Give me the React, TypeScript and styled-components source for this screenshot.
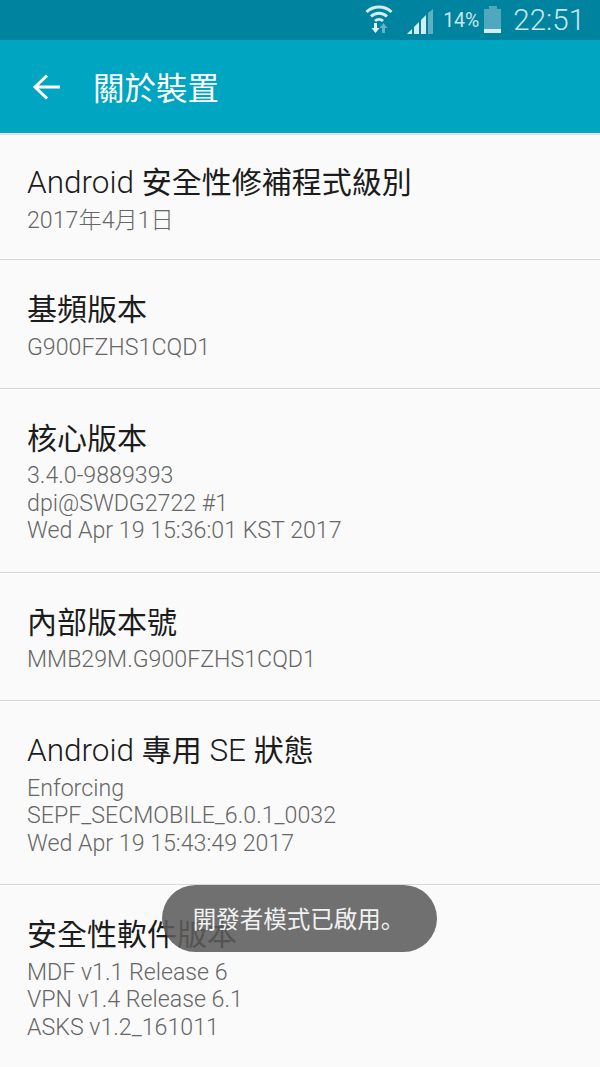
import React, { FC } from 'react';
import styled, { createGlobalStyle } from 'styled-components';

const sans = `Roboto, "Noto Sans CJK TC", sans-serif`;

const GlobalStyle = createGlobalStyle`
    html, body {
        margin: 0;
        padding: 0;
        background: #fafafa;
    }
    body {
        font-family: ${sans};
    }
`;

type InfoItem = {
    title: string;
    lines: string[];
};

const items: InfoItem[] = [
    { title: 'Android 安全性修補程式級別', lines: ['2017年4月1日'] },
    { title: '基頻版本', lines: ['G900FZHS1CQD1'] },
    {
        title: '核心版本',
        lines: ['3.4.0-9889393', 'dpi@SWDG2722 #1', 'Wed Apr 19 15:36:01 KST 2017'],
    },
    { title: '內部版本號', lines: ['MMB29M.G900FZHS1CQD1'] },
    {
        title: 'Android 專用 SE 狀態',
        lines: ['Enforcing', 'SEPF_SECMOBILE_6.0.1_0032', 'Wed Apr 19 15:43:49 2017'],
    },
    {
        title: '安全性軟件版本',
        lines: ['MDF v1.1 Release 6', 'VPN v1.4 Release 6.1', 'ASKS v1.2_161011'],
    },
];

const App: FC = () => (
    <Screen>
        <GlobalStyle />
        <StatusBar>
            <WifiIcon width="28" height="29" viewBox="0 0 28 29" fill="none">
                <path d="M1.500 8A18 18 0 0 1 26.500 8" stroke="#d3edf2" strokeWidth="3" />
                <path d="M6 12.500A11.500 11.500 0 0 1 22 12.500" stroke="#d3edf2" strokeWidth="3" />
                <path d="M10 17A6 6 0 0 1 18 17" stroke="#d3edf2" strokeWidth="3" />
                <path d="M9 19h3v5h2.500l-4 5-4-5H9z" fill="#e4f4f7" />
                <path d="M17 29v-5h-2.500l4-5 4 5H20v5z" fill="#62b3c5" />
            </WifiIcon>
            <SignalIcon width="26" height="25" viewBox="0 0 26 25">
                <path d="M0 25l5-5v5z" fill="#d3edf2" />
                <path d="M7 18l5-5v12H7z" fill="#d3edf2" />
                <path d="M14 11l5-5v19h-5z" fill="#d3edf2" />
                <path d="M21 4l5-4v25h-5z" fill="#5fb0c2" />
            </SignalIcon>
            <Percent>14%</Percent>
            <Battery>
                <BatteryCap />
                <BatteryBody>
                    <BatteryLevel />
                </BatteryBody>
            </Battery>
            <Clock>22:51</Clock>
        </StatusBar>
        <AppBar>
            <svg width="30" height="26" viewBox="0 0 30 26" fill="none">
                <path d="M28 13H3M15 1.500L3 13l12 11.500" stroke="#fff" strokeWidth="3" />
            </svg>
            <Title>關於裝置</Title>
        </AppBar>
        <List>
            {items.map((item) => (
                <Row key={item.title}>
                    <RowTitle>
                        {item.title.split(/([A-Za-z ]+)/).map((part, i) =>
                            i % 2 === 1 ? <Latin key={i}>{part}</Latin> : part
                        )}
                    </RowTitle>
                    {item.lines.map((line) => (
                        <RowLine key={line}>{line}</RowLine>
                    ))}
                </Row>
            ))}
        </List>
        <Toast>
            開發者模式已啟用<Stop>。</Stop>
        </Toast>
    </Screen>
);

const Screen = styled.div`
    position: relative;
    width: 600px;
    height: 1067px;
    overflow: hidden;
    background: #fafafa;
`;

const StatusBar = styled.div`
    display: flex;
    align-items: center;
    justify-content: flex-end;
    height: 40px;
    padding-right: 15px;
    box-sizing: border-box;
    background: #00839f;
    color: #c9e6ec;
`;

const WifiIcon = styled.svg`
    margin: 0 14px 3px 0;
`;

const SignalIcon = styled.svg`
    margin: 2px 10px 0 0;
`;

const Percent = styled.span`
    font-size: 19.500px;
`;

const Battery = styled.div`
    display: flex;
    flex-direction: column;
    align-items: center;
    width: 17px;
    margin: 0 12px 2px 5px;
`;

const BatteryCap = styled.div`
    width: 8px;
    height: 3px;
    background: #4fa8bb;
`;

const BatteryBody = styled.div`
    display: flex;
    align-items: flex-end;
    width: 17px;
    height: 24px;
    background: #4fa8bb;
`;

const BatteryLevel = styled.div`
    width: 100%;
    height: 4px;
    background: #d3edf2;
`;

const Clock = styled.span`
    font-size: 29.500px;
    font-weight: 300;
`;

const AppBar = styled.div`
    position: relative;
    display: flex;
    align-items: center;
    height: 93px;
    padding-left: 32px;
    box-sizing: border-box;
    background: #00a5c2;
    box-shadow: 0 2px 1px #e2e2e2;
`;

const Title = styled.h1`
    margin: 0 0 2px 31px;
    font-size: 31.500px;
    font-weight: 400;
    color: #fff;
`;

const List = styled.div`
    display: flex;
    flex-direction: column;
`;

const Row = styled.div`
    display: flex;
    flex-direction: column;
    padding: 29px 27px 26.750px;
    border-bottom: 1px solid #d9d9d9;

    &:first-child {
        padding-bottom: 25px;
    }

    &:last-child {
        border-bottom: 0;
    }
`;

const RowTitle = styled.div`
    margin-bottom: 2.500px;
    font-size: 30px;
    line-height: 42px;
    color: #1c1c1c;
`;

const Latin = styled.span`
    font-size: 31.500px;
    font-weight: 300;
`;

const RowLine = styled.div`
    font-size: 23.200px;
    font-weight: 300;
    line-height: 27.500px;
    color: #666;
`;

const Toast = styled.div`
    position: absolute;
    left: 162px;
    top: 885px;
    display: flex;
    align-items: center;
    justify-content: center;
    width: 275px;
    height: 67px;
    padding: 0 2px 2px 0;
    box-sizing: border-box;
    border-radius: 33.500px;
    background: rgba(92, 92, 92, 0.88);
    color: #f2f2f2;
    font-size: 23.500px;
`;

const Stop = styled.span`
    font-family: "Noto Sans CJK SC", sans-serif;
`;

export default App;
